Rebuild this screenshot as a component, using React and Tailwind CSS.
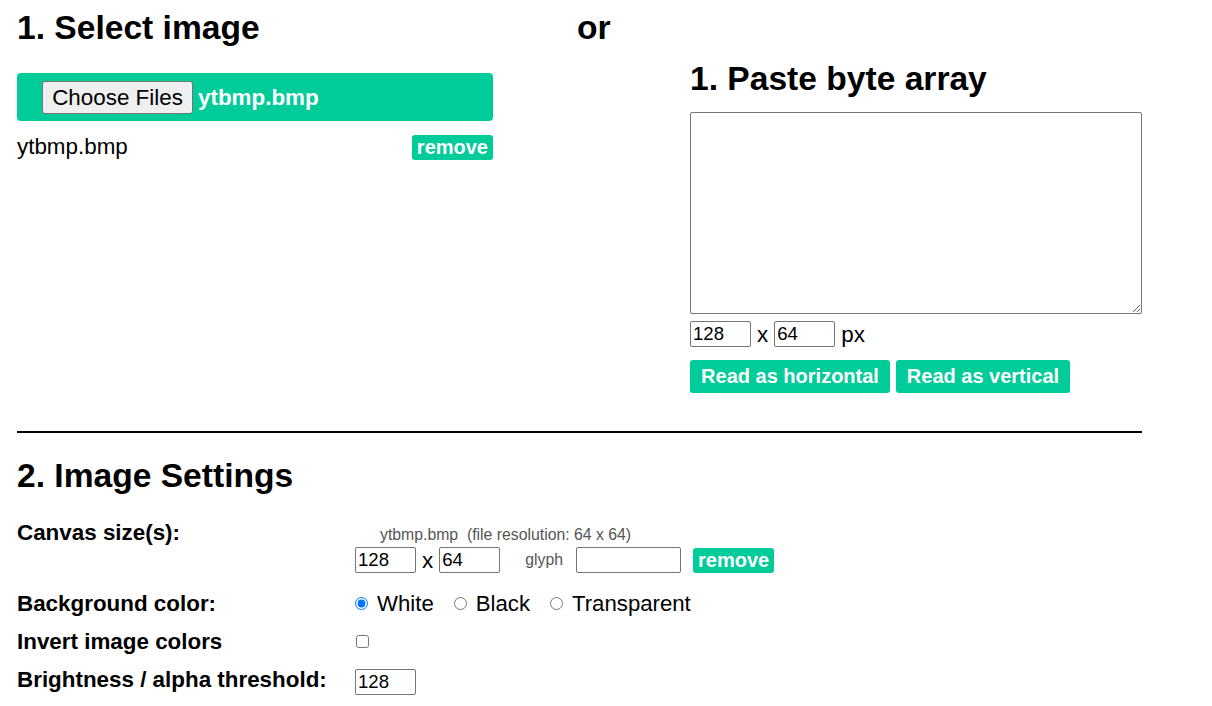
import React from "react";

const green = "bg-[#00cc99]";

function Input({ value, w = "w-[61px]" }) {
  return (
    <input
      type="text"
      defaultValue={value}
      className={`${w} h-[26px] border border-[#767676] rounded-[2px] px-[2px] text-[18.6px] leading-[20px] text-black bg-white outline-none`}
    />
  );
}

function Radio({ label, checked }) {
  return (
    <label className="flex items-center">
      <input
        type="radio"
        name="bg"
        defaultChecked={checked}
        className="m-0 w-[13px] h-[13px] accent-[#0075ff]"
      />
      <span className="ml-[9px] text-[22.2px] leading-[25px]">{label}</span>
    </label>
  );
}

export default function App() {
  return (
    <div
      className="min-h-[706px] bg-white text-black pl-[17px]"
      style={{ fontFamily: '"Liberation Sans", Arial, sans-serif' }}
    >
      {/* top section */}
      <div className="flex items-start">
        <div className="w-[476px] shrink-0">
          <h2 className="mt-[9px] text-[33.6px] leading-[37px] font-bold">1. Select image</h2>
          <div className={`mt-[27px] h-[48px] ${green} rounded-[4px] flex items-center pl-[25px]`}>
            <button className="w-[151px] h-[33px] bg-[#efefef] border border-[#767676] rounded-[3px] text-[22.4px] leading-[25px] text-black">
              Choose Files
            </button>
            <span className="ml-[5px] text-white font-bold text-[22.4px] leading-[25px]">ytbmp.bmp</span>
          </div>
          <div className="mt-[14px] flex items-center justify-between">
            <span className="mb-[2px] text-[22.4px] leading-[16px]">ytbmp.bmp</span>
            <button className={`${green} text-white font-bold text-[20px] leading-[25px] h-[25px] px-[5px] rounded-[3px]`}>
              remove
            </button>
          </div>
        </div>
        <h2 className="ml-[84px] mt-[9px] w-[32px] shrink-0 whitespace-nowrap text-[33.6px] leading-[37px] font-bold">or</h2>
        <div className="ml-[81px] w-[452px] shrink-0">
          <h2 className="mt-[60px] text-[33.6px] leading-[37px] font-bold">1. Paste byte array</h2>
          <textarea className="mt-[15px] block w-[452px] h-[202px] border border-[#767676] rounded-[2px] bg-white outline-none" />
          <div className="mt-[7px] flex items-center">
            <Input value="128" />
            <span className="mx-[6px] text-[22.4px] leading-[25px]">x</span>
            <Input value="64" />
            <span className="ml-[6px] text-[22.4px] leading-[25px]">px</span>
          </div>
          <div className="mt-[13px] flex gap-[6px]">
            <button className={`${green} text-white font-bold text-[20px] leading-[33px] h-[33px] w-[200px] rounded-[3px]`}>
              Read as horizontal
            </button>
            <button className={`${green} text-white font-bold text-[20px] leading-[33px] h-[33px] w-[174px] rounded-[3px]`}>
              Read as vertical
            </button>
          </div>
        </div>
      </div>

      <div className="mt-[38px] h-[2px] w-[1125px] bg-black" />

      <h2 className="mt-[24px] text-[33.6px] leading-[37px] font-bold">2. Image Settings</h2>

      {/* settings rows */}
      <div className="mt-[26px] flex items-start">
        <div className="w-[338px] text-[22.4px] leading-[25px] font-bold">Canvas size(s):</div>
        <div>
          <div className="mt-[6px] ml-[25px] text-[15.8px] leading-[18px] text-[#555]">
            ytbmp.bmp&nbsp;&nbsp;(file resolution: 64 x 64)
          </div>
          <div className="mt-[3px] flex items-center">
            <Input value="128" />
            <span className="mx-[6px] text-[22.4px] leading-[25px]">x</span>
            <Input value="64" />
            <span className="ml-[25px] text-[15.8px] leading-[18px] text-[#555]">glyph</span>
            <div className="ml-[13px]">
              <Input value="" w="w-[105px]" />
            </div>
            <button className={`ml-[12px] ${green} text-white font-bold text-[20px] leading-[25px] h-[25px] px-[5px] rounded-[3px]`}>
              remove
            </button>
          </div>
        </div>
      </div>

      <div className="mt-[18px] flex items-center">
        <div className="w-[338px] text-[22.4px] leading-[25px] font-bold">Background color:</div>
        <div className="flex items-center gap-[20px]">
          <Radio label="White" checked />
          <Radio label="Black" />
          <Radio label="Transparent" />
        </div>
      </div>

      <div className="mt-[13px] flex items-center">
        <div className="w-[338px] text-[22.4px] leading-[25px] font-bold">Invert image colors</div>
        <input type="checkbox" className="m-0 ml-[1px] w-[13px] h-[13px]" />
      </div>

      <div className="mt-[13px] flex items-start">
        <div className="w-[338px] text-[22.4px] leading-[25px] font-bold">Brightness / alpha threshold:</div>
        <div className="mt-[2px]">
          <Input value="128" />
        </div>
      </div>
    </div>
  );
}
